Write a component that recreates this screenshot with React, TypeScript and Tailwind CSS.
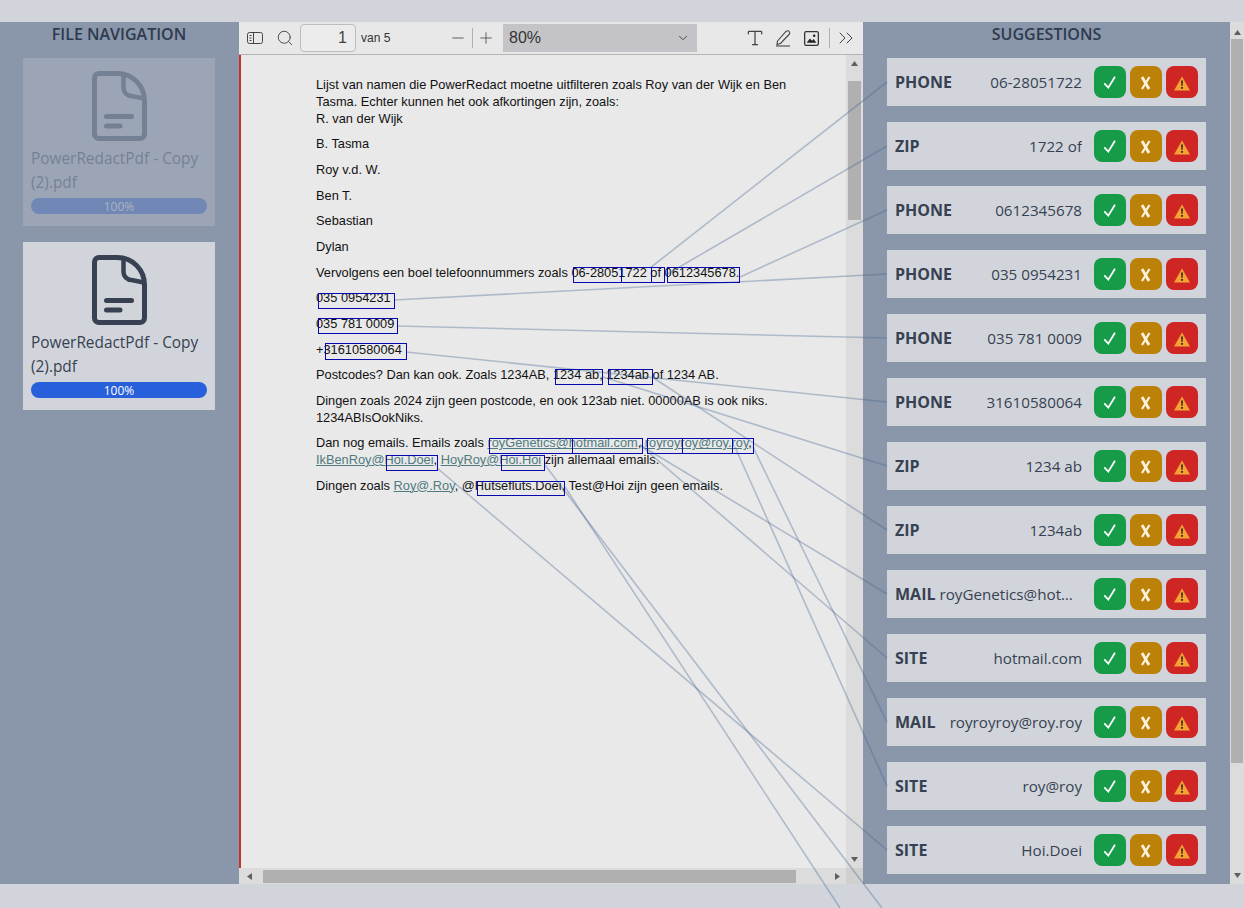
import { ChevronDown, ChevronsRight, Minus, Plus, Search, Type } from "lucide-react";

const suggestions = [
  { kind: "PHONE", value: "06-28051722" },
  { kind: "ZIP", value: "1722 of" },
  { kind: "PHONE", value: "0612345678" },
  { kind: "PHONE", value: "035 0954231" },
  { kind: "PHONE", value: "035 781 0009" },
  { kind: "PHONE", value: "31610580064" },
  { kind: "ZIP", value: "1234 ab" },
  { kind: "ZIP", value: "1234ab" },
  { kind: "MAIL", value: "royGenetics@hotmail.com" },
  { kind: "SITE", value: "hotmail.com" },
  { kind: "MAIL", value: "royroyroy@roy.roy" },
  { kind: "SITE", value: "roy@roy" },
  { kind: "SITE", value: "Hoi.Doei" },
];

// [x, y, w, h] of the highlights on the pdf page
const boxes = [
  [573, 267, 48, 15],
  [621, 267, 30, 15],
  [651, 267, 13, 15],
  [667, 267, 72, 15],
  [318, 293, 76, 15],
  [318, 318, 79, 15],
  [325, 343, 81, 16],
  [555, 369, 47, 15],
  [608, 369, 44, 15],
  [489, 438, 83, 15],
  [572, 438, 70, 15],
  [647, 438, 35, 15],
  [682, 438, 50, 15],
  [732, 438, 21, 15],
  [386, 455, 51, 15],
  [501, 455, 43, 15],
  [477, 481, 87, 14],
];

// [x1, y1, x2, y2] from a highlight to its suggestion card
const links = [
  [650, 268, 887, 82],
  [664, 276, 887, 146],
  [740, 277, 887, 210],
  [394, 300, 887, 274],
  [397, 326, 887, 338],
  [406, 352, 887, 402],
  [603, 377, 887, 466],
  [652, 377, 887, 530],
  [640, 445, 887, 594],
  [640, 445, 887, 658],
  [753, 447, 887, 722],
  [735, 447, 887, 786],
  [437, 468, 887, 850],
  [545, 465, 882, 908],
  [565, 487, 840, 908],
];

function FileIcon() {
  return (
    <svg viewBox="0 0 55 70" className="h-[70px] w-[55px]" fill="none" stroke="currentColor" strokeWidth="5" strokeLinecap="round">
      <path d="M7 2.5H25C41 2.5 52.5 15 52.5 30V63A4.5 4.5 0 0 1 48 67.5H7A4.5 4.5 0 0 1 2.5 63V7A4.5 4.5 0 0 1 7 2.5Z" />
      <path d="M31.5 4V17A8 8 0 0 0 39.5 25L52 27.5" strokeWidth="4.5" />
      <path d="M14.5 45.5H39.5M14.5 55H28" />
    </svg>
  );
}

function FileCard({ faded }: { faded?: boolean }) {
  return (
    <div className={`flex h-[168px] w-[192px] flex-col items-center bg-[#d1d5db] px-2 pt-[13px] text-[#374151] ${faded ? "opacity-25" : ""}`}>
      <FileIcon />
      <p className="mt-[6px] w-full text-[15.4px] leading-6">PowerRedactPdf - Copy (2).pdf</p>
      <div className="mt-[3px] h-4 w-full rounded-full bg-[#285fdb] text-center text-[12px] leading-[17px] text-white">100%</div>
    </div>
  );
}

function SuggestionCard({ kind, value }: { kind: string; value: string }) {
  return (
    <div className="flex h-12 w-[319px] items-center bg-[#d1d5db] pl-2 pr-2 text-[15.2px] text-[#374151]">
      <span className="text-[16px] font-bold">{kind}</span>
      <span className="ml-1 min-w-0 flex-1 truncate text-right">{value}</span>
      <div className="ml-3 flex shrink-0 gap-1">
        <button className="h-8 w-8 rounded-lg bg-[#169b49]">
          <svg viewBox="0 0 32 32" className="h-8 w-8" fill="none" stroke="white" strokeWidth="1.8">
            <path d="M10.3 17.3L14.3 21.6L21 10.7" />
          </svg>
        </button>
        <button className="h-8 w-8 rounded-lg bg-[#bb8109]">
          <svg viewBox="0 0 32 32" className="h-8 w-8" fill="none" stroke="#fdf3dc">
            <path d="M12 11L19 23" strokeWidth="2.8" />
            <path d="M19.5 11L12 23" strokeWidth="2.2" />
          </svg>
        </button>
        <button className="h-8 w-8 rounded-lg bg-[#cf2525]">
          <svg viewBox="0 0 32 32" className="h-8 w-8">
            <path d="M16 10.5L24 24.5H8Z" fill="#f5a233" />
            <path d="M15.1 14.5H16.9L16.5 20H15.5Z M15.1 21H16.9V22.8H15.1Z" fill="#2e2210" />
          </svg>
        </button>
      </div>
    </div>
  );
}

function Arrow({ dir }: { dir: "up" | "down" | "left" | "right" }) {
  const d = { up: "M0 5L3.5 0L7 5Z", down: "M0 0L7 0L3.5 5Z", left: "M5 0V7L0 3.5Z", right: "M0 0V7L5 3.5Z" }[dir];
  const box = dir === "up" || dir === "down" ? "h-[5px] w-[7px]" : "h-[7px] w-[5px]";
  return (
    <svg viewBox={dir === "up" || dir === "down" ? "0 0 7 5" : "0 0 5 7"} className={box}>
      <path d={d} fill="#5f5f5f" />
    </svg>
  );
}

function Toolbar() {
  return (
    <div className="flex h-[33px] shrink-0 items-center border-b border-[#b4b4b4] bg-[#e8e8e8] text-[#444] [font-family:'Liberation_Sans',Arial,sans-serif]">
      <svg viewBox="0 0 16 14" className="ml-2 h-[14px] w-4" fill="none" stroke="#444" strokeWidth="1">
        <rect x="0.5" y="1.5" width="15" height="11" rx="2" />
        <path d="M6.5 1.5V12.5M2.5 4.5H4.5M2.5 7H4.5M2.5 9.5H4.5" />
      </svg>
      <Search className="ml-[13px] h-[18px] w-[18px]" strokeWidth={1.25} />
      <div className="ml-[6px] flex h-7 w-14 items-center justify-end rounded-sm border border-[#bcbcbc] bg-[#ececec] pr-2 text-[16px]">1</div>
      <span className="ml-[5px] w-[88px] text-[12px] text-[#333]">van 5</span>
      <Minus className="h-[18px] w-[18px]" strokeWidth={1.1} />
      <div className="ml-[5px] h-5 w-px bg-[#b0b0b0]" />
      <Plus className="ml-[4px] h-[18px] w-[18px]" strokeWidth={1.1} />
      <div className="ml-[8px] flex h-7 w-[194px] items-center justify-between bg-[#c4c4c8] pl-[6px] pr-[7px] text-[16px] text-[#333]">
        <span>80%</span>
        <ChevronDown className="h-[14px] w-[14px]" strokeWidth={1.5} />
      </div>
      <Type className="ml-[48px] h-[20px] w-[20px]" strokeWidth={1.5} />
      <svg viewBox="0 0 18 18" className="ml-[9px] h-[18px] w-[18px]" fill="none" stroke="#444" strokeWidth="1.1">
        <path d="M3.5 12L12 2.5C13 1.5 15 1.5 15.5 3C16 4 15.5 5 15 5.5L6.5 14.5L3 15.5Z" />
        <path d="M2 17H16" />
      </svg>
      <svg viewBox="0 0 14 14" className="ml-[12px] h-[15px] w-[15px]">
        <rect x="0.6" y="0.6" width="12.8" height="12.8" rx="1.5" fill="none" stroke="#333" strokeWidth="1.2" />
        <path d="M2.5 11L5.5 7L7.5 9L9 7.5L11.5 11Z" fill="#222" />
        <circle cx="9.5" cy="4.5" r="1.2" fill="#222" />
      </svg>
      <div className="ml-[10px] h-5 w-px bg-[#b0b0b0]" />
      <ChevronsRight className="ml-[4px] h-6 w-6" strokeWidth={1} />
    </div>
  );
}

const linkClass = "text-[#4f7a80] underline";

function PdfPage() {
  return (
    <div className="min-w-0 flex-1 border-l-2 border-[#c9302c] bg-[#e9e9e9] pl-[75px] pt-[22.4px] text-[12.8px] leading-[16.6px] whitespace-nowrap text-[#111] [font-family:'Liberation_Sans',Arial,sans-serif]">
      <p className="mb-[9px]">
        Lijst van namen die PowerRedact moetne uitfilteren zoals Roy van der Wijk en Ben
        <br />
        Tasma. Echter kunnen het ook afkortingen zijn, zoals:
        <br />
        R. van der Wijk
      </p>
      <p className="mb-[9.1px]">B. Tasma</p>
      <p className="mb-[9.1px]">Roy v.d. W.</p>
      <p className="mb-[9.1px]">Ben T.</p>
      <p className="mb-[9.1px]">Sebastian</p>
      <p className="mb-[9.1px]">Dylan</p>
      <p className="mb-[9.1px]">Vervolgens een boel telefoonnummers zoals 06-28051722 of 0612345678.</p>
      <p className="mb-[9.1px]">035 0954231</p>
      <p className="mb-[9.1px]">035 781 0009</p>
      <p className="mb-[9.1px]">+31610580064</p>
      <p className="mb-[9.1px]">Postcodes? Dan kan ook. Zoals 1234AB, 1234 ab, 1234ab of 1234 AB.</p>
      <p className="mb-[9.1px]">
        Dingen zoals 2024 zijn geen postcode, en ook 123ab niet. 00000AB is ook niks.
        <br />
        1234ABIsOokNiks.
      </p>
      <p className="mb-[9.1px]">
        Dan nog emails. Emails zoals <span className={linkClass}>royGenetics@hotmail.com</span>, <span className={linkClass}>royroyroy@roy.roy</span>,
        <br />
        <span className={linkClass}>IkBenRoy@Hoi.Doei</span>, <span className={linkClass}>HoyRoy@Hoi.Hoi</span> zijn allemaal emails.
      </p>
      <p>
        Dingen zoals <span className={linkClass}>Roy@.Roy</span>, @Hutsefluts.Doei, Test@Hoi zijn geen emails.
      </p>
    </div>
  );
}

function PdfViewer() {
  return (
    <div className="flex w-[624px] shrink-0 flex-col">
      <Toolbar />
      <div className="flex min-h-0 flex-1">
        <PdfPage />
        <div className="flex w-[17px] shrink-0 flex-col items-center bg-[#dcdcdc]">
          <div className="flex h-[26px] shrink-0 items-center justify-center pb-[9px]">
            <Arrow dir="up" />
          </div>
          <div className="h-[139px] w-[13px] bg-[#b0b0b0]" />
          <div className="flex-1" />
          <div className="flex h-[18px] items-center justify-center">
            <Arrow dir="down" />
          </div>
        </div>
      </div>
      <div className="flex h-4 shrink-0 items-center bg-[#dcdcdc]">
        <div className="ml-[8px] flex w-[16px] shrink-0">
          <Arrow dir="left" />
        </div>
        <div className="h-[13px] w-[533px] bg-[#b0b0b0]" />
        <div className="ml-[39px] shrink-0">
          <Arrow dir="right" />
        </div>
        <div className="ml-auto h-4 w-[17px] bg-[#d0d0d0]" />
      </div>
    </div>
  );
}

export default function App() {
  return (
    <div className="relative flex h-[908px] w-[1244px] flex-col overflow-hidden bg-[#d1d5db] [font-family:'Open_Sans','Noto_Sans',sans-serif]">
      <div className="h-[22px] shrink-0" />
      <div className="flex h-[862px] shrink-0">
        <aside className="flex w-[239px] shrink-0 flex-col bg-[#8a96aa] pl-[23px]">
          <h2 className="h-9 w-[192px] text-center text-[16px] leading-6 font-semibold text-[#2e3a4e]">FILE NAVIGATION</h2>
          <div className="flex flex-col gap-4">
            <FileCard faded />
            <FileCard />
          </div>
        </aside>
        <PdfViewer />
        <aside className="flex w-[367px] shrink-0 flex-col items-center bg-[#8a96aa]">
          <h2 className="h-9 text-[16px] leading-6 font-semibold text-[#2e3a4e]">SUGGESTIONS</h2>
          <div className="flex flex-col gap-4">
            {suggestions.map((s, i) => (
              <SuggestionCard key={i} kind={s.kind} value={s.value} />
            ))}
          </div>
        </aside>
        <div className="flex w-[14px] shrink-0 flex-col items-center bg-[#dcdcdc]">
          <div className="flex h-[17px] shrink-0 items-center justify-center pt-[3px]">
            <Arrow dir="up" />
          </div>
          <div className="h-[724px] w-[12px] bg-[#b0b0b0]" />
          <div className="flex-1" />
          <div className="flex h-[18px] items-center justify-center">
            <Arrow dir="down" />
          </div>
        </div>
      </div>
      <svg className="pointer-events-none absolute top-0 left-0 h-[908px] w-[1244px]" viewBox="0 0 1244 908" fill="none">
        {links.map(([x1, y1, x2, y2], i) => (
          <line key={i} x1={x1} y1={y1} x2={x2} y2={y2} stroke="#41648f" strokeOpacity="0.35" strokeWidth="1.6" />
        ))}
        {boxes.map(([x, y, w, h], i) => (
          <rect key={i} x={x + 0.5} y={y + 0.5} width={w} height={h} stroke="#0808b0" strokeWidth="1" shapeRendering="crispEdges" />
        ))}
      </svg>
    </div>
  );
}
